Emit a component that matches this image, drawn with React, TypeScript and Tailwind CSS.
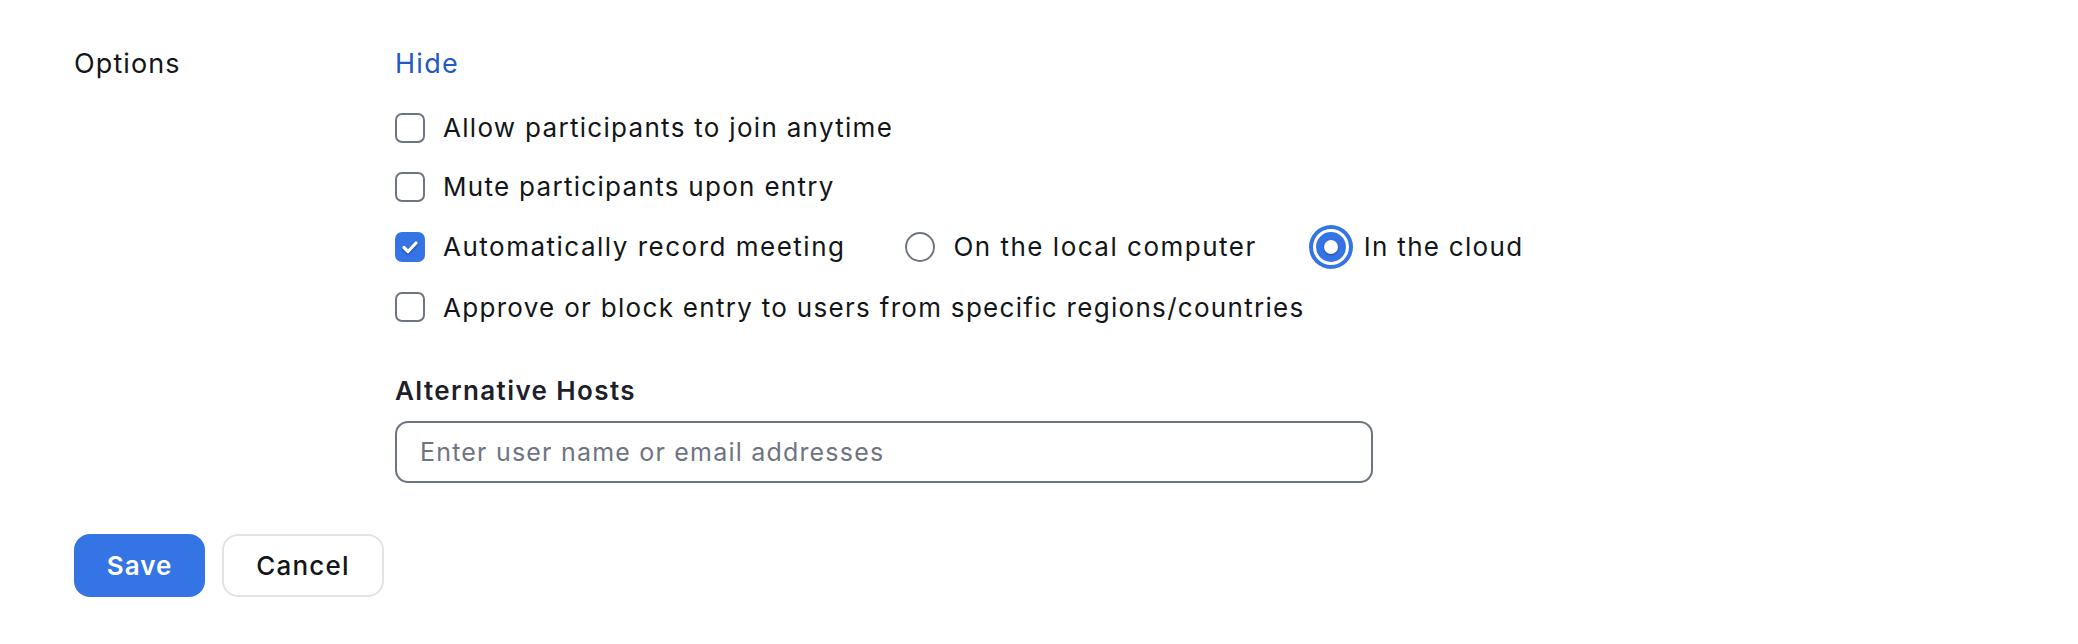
import React, { useState } from "react";

const Checkbox = ({ checked, onClick }: { checked: boolean; onClick: () => void }) => (
  <button
    onClick={onClick}
    className={`flex h-[30px] w-[30px] shrink-0 items-center justify-center rounded-[7px] ${
      checked ? "bg-[#3574e5]" : "border-2 border-[#6f7482] bg-white"
    }`}
  >
    {checked && (
      <svg width="22" height="22" viewBox="0 0 22 22" className="drop-shadow-[0_1px_1px_rgba(0,0,0,0.4)]">
        <polyline points="5,11.5 9,15.5 17,7" fill="none" stroke="white" strokeWidth="3.2" strokeLinecap="round" strokeLinejoin="round" />
      </svg>
    )}
  </button>
);

const Radio = ({ checked, onClick }: { checked: boolean; onClick: () => void }) => (
  <button
    onClick={onClick}
    className={`flex h-[30px] w-[30px] shrink-0 items-center justify-center rounded-full ${
      checked
        ? "bg-[#3574e5] ring-4 ring-[#3574e5] ring-offset-[3px] ring-offset-white"
        : "border-2 border-[#6f7482] bg-white"
    }`}
  >
    {checked && <span className="h-[14px] w-[14px] rounded-full bg-white shadow-[0_1px_2px_rgba(0,0,0,0.4)]" />}
  </button>
);

const App = () => {
  const [joinAnytime, setJoinAnytime] = useState(false);
  const [muteOnEntry, setMuteOnEntry] = useState(false);
  const [autoRecord, setAutoRecord] = useState(true);
  const [recordWhere, setRecordWhere] = useState("cloud");
  const [approveBlock, setApproveBlock] = useState(false);

  return (
    <div className="min-h-[644px] bg-white pl-[74px] pt-[44px] font-['Inter',sans-serif] text-[#131619]">
      <div className="flex">
        <div className="h-[40px] w-[321px] text-[27px] leading-[40px] tracking-[1.1px]">Options</div>
        <div className="flex flex-col">
          <div className="h-[40px] text-[27px] leading-[40px] tracking-[1.3px] text-[#2458c6]">Hide</div>

          <div className="mt-[14px] flex flex-col text-[26px] tracking-[1.3px]">
            <label className="flex h-[59px] items-center gap-[18px]">
              <Checkbox checked={joinAnytime} onClick={() => setJoinAnytime(!joinAnytime)} />
              <span>Allow participants to join anytime</span>
            </label>
            <label className="flex h-[59px] items-center gap-[18px]">
              <Checkbox checked={muteOnEntry} onClick={() => setMuteOnEntry(!muteOnEntry)} />
              <span>Mute participants upon entry</span>
            </label>
            <div className="flex h-[61px] items-center">
              <label className="flex items-center gap-[18px]">
                <Checkbox checked={autoRecord} onClick={() => setAutoRecord(!autoRecord)} />
                <span className="tracking-[1.5px]">Automatically record meeting</span>
              </label>
              <label className="ml-[60px] flex items-center gap-[18px]">
                <Radio checked={recordWhere === "local"} onClick={() => setRecordWhere("local")} />
                <span className="tracking-[1.5px]">On the local computer</span>
              </label>
              <label className="ml-[59px] flex items-center gap-[18px]">
                <Radio checked={recordWhere === "cloud"} onClick={() => setRecordWhere("cloud")} />
                <span>In the cloud</span>
              </label>
            </div>
            <label className="flex h-[60px] items-center gap-[18px]">
              <Checkbox checked={approveBlock} onClick={() => setApproveBlock(!approveBlock)} />
              <span>Approve or block entry to users from specific regions/countries</span>
            </label>
          </div>

          <div className="mt-[34px] h-[40px] text-[26px] font-semibold leading-[40px] tracking-[1.4px] text-[#1d1f2b]">
            Alternative Hosts
          </div>
          <input
            placeholder="Enter user name or email addresses"
            className="mt-[10px] h-[62px] w-[978px] rounded-[13px] border-2 border-[#6f7482] px-[23px] text-[25px] tracking-[1.2px] outline-none placeholder:text-[#6f7482]"
          />
        </div>
      </div>

      <div className="mt-[51px] flex gap-[17px]">
        <button className="h-[63px] w-[131px] rounded-[16px] bg-[#3574e5] text-[26px] font-semibold tracking-[1px] text-white">
          Save
        </button>
        <button className="h-[63px] w-[162px] rounded-[16px] border-2 border-[#e0e3e8] bg-white text-[26px] font-medium tracking-[1.2px] text-[#131619]">
          Cancel
        </button>
      </div>
    </div>
  );
};

export default App;
